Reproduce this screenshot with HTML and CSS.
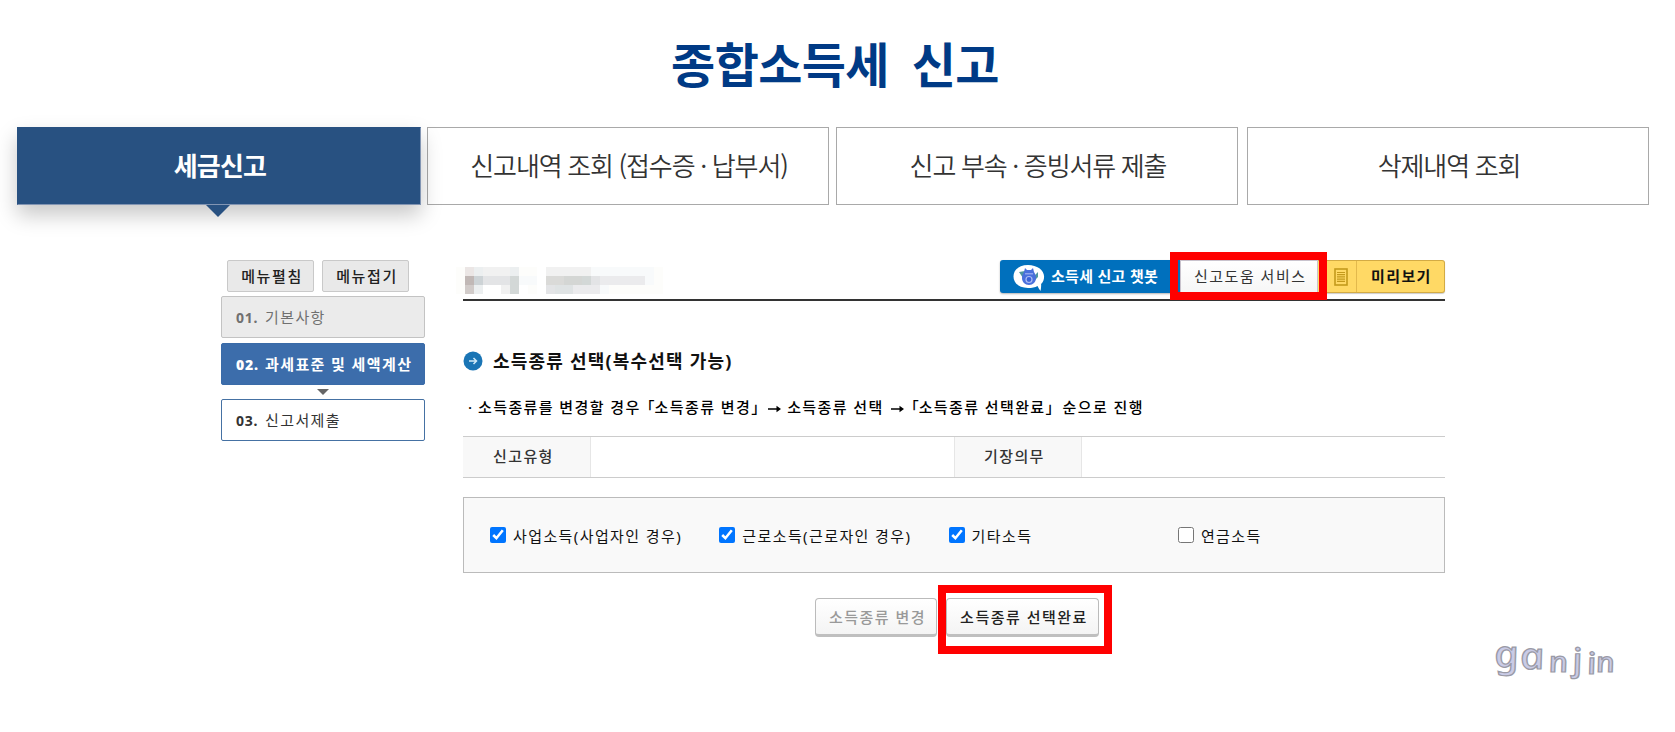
FILE: index.html
```html
<!DOCTYPE html>
<html lang="ko">
<head>
    <meta charset="UTF-8">
    <meta name="viewport" content="width=device-width, initial-scale=1.0">
    <title>종합소득세 신고</title>
    <link rel="stylesheet" href="styles.css">
</head>
<body>
    <h1>종합소득세 신고</h1>

    <div class="tabs">
        <a class="tab active">세금신고</a>
        <a class="tab">신고내역 조회 (접수증 · 납부서)</a>
        <a class="tab">신고 부속 · 증빙서류 제출</a>
        <a class="tab">삭제내역 조회</a>
    </div>

    <div class="content">
        <div class="side">
            <div class="side-buttons">
                <button>메뉴펼침</button>
                <button>메뉴접기</button>
            </div>
            <a class="step done"><b>01.</b>기본사항</a>
            <a class="step current"><b>02.</b>과세표준 및 세액계산</a>
            <a class="step next"><b>03.</b>신고서제출</a>
        </div>

        <div class="main">
            <div class="main-header">
                <!-- 가려진 이름 -->
                <svg class="mosaic" width="207" height="27" viewBox="0 0 23 3" shape-rendering="crispEdges">
                    <path fill="#fdfdfb" d="M0 0h1v3h-1zM7 0h2v1h-2zM8 2h1v1h-1zM22 0h1v3h-1zM17 2h5v1h-5z"/>
                    <path fill="#ebe6e5" d="M1 0h1v1h-1z"/>
                    <path fill="#c1b8b6" d="M1 1h1v1h-1z"/>
                    <path fill="#d1cbc9" d="M1 2h1v1h-1z"/>
                    <path fill="#eceff0" d="M2 0h1v1h-1zM6 0h1v1h-1zM2 2h1v1h-1z"/>
                    <path fill="#cdd3d6" d="M2 1h1v1h-1z"/>
                    <path fill="#f1f1f1" d="M3 0h3v1h-3zM5 2h1v1h-1zM10 0h5v1h-5z"/>
                    <path fill="#e3e4e6" d="M3 1h3v1h-3zM15 1h1v1h-1zM10 2h1v1h-1z"/>
                    <path fill="#d3d8d7" d="M6 1h1v2h-1zM14 1h1v1h-1z"/>
                    <path fill="#f8fafb" d="M7 1h2v1h-2zM15 0h7v1h-7zM21 1h1v1h-1zM16 2h1v1h-1z"/>
                    <path fill="#dadad8" d="M10 1h2v1h-2z"/>
                    <path fill="#d4d6d4" d="M12 1h2v1h-2z"/>
                    <path fill="#ebebed" d="M16 1h5v1h-5zM13 2h3v1h-3z"/>
                    <path fill="#dfe3e4" d="M11 2h2v1h-2z"/>
                </svg>
                <div class="header-buttons">
                    <a class="chatbot">
                        <svg width="32" height="28" viewBox="0 0 32 28">
                            <path fill="#fff" d="M15 1C6 1 .5 6 .5 12.500S6 24 15 24c4 0 7-.6 9.500-2 .8 1.700 1.700 3.500 3 5 .5-2.300.8-4.600.6-7 2-2 3-4.500 3-7.500C31 6 24 1 15 1z"/>
                            <path fill="#4f96a0" d="M6 8l6-1 1 6-3 1zM25 8l-5 5 2 3 3-3z"/>
                            <path fill="#4a70dc" d="M12 4l2 2h4l2-2 1 4c1 2 2 3 2 6 0 4-3 7-7 7s-7-3-7-7c0-3 1-4 2-6z"/>
                            <path fill="#8fa3ee" d="M12 9h8v1.500h-8z"/>
                            <circle cx="16" cy="15.500" r="3" fill="#3a62d8" stroke="#aebcf2" stroke-width="1.200"/>
                        </svg>
                        <span>소득세 신고 챗봇</span>
                    </a>
                    <a class="help">신고도움 서비스<i class="mark"></i></a>
                    <a class="preview">
                        <svg width="14" height="18" viewBox="0 0 14 18" fill="none" stroke="#c49a1c">
                            <rect x="1" y="1" width="12" height="16" stroke-width="1.600"/>
                            <path stroke-width="1.200" d="M3 4.500h8M3 6.700h8M3 8.900h8M3 11.100h8M3 13.300h8"/>
                        </svg>
                        <span>미리보기</span>
                    </a>
                </div>
            </div>

            <h2>
                <svg width="20" height="20" viewBox="0 0 20 20">
                    <circle cx="10" cy="10" r="9.500" fill="#1a75b5"/>
                    <path d="M6 10h7M10.500 7l3 3-3 3" fill="none" stroke="#cfeaf8" stroke-width="1.500"/>
                </svg>
                소득종류 선택(복수선택 가능)
            </h2>
            <p class="guide"><span class="dot">·</span>소득종류를 변경할 경우<span class="quote">「</span>소득종류 변경<span class="quote close">」</span><svg class="arrow" width="13" height="8" viewBox="0 0 13 8"><path d="M0 3.200h8.500V.8L13 4 8.500 7.200V4.800H0z"/></svg>소득종류 선택<svg class="arrow second" width="13" height="8" viewBox="0 0 13 8"><path d="M0 3.200h8.500V.8L13 4 8.500 7.200V4.800H0z"/></svg><span class="quote">「</span>소득종류 선택완료<span class="quote close">」</span>순으로 진행</p>

            <div class="info">
                <div class="label">신고유형</div>
                <div class="value"></div>
                <div class="label second">기장의무</div>
                <div class="value"></div>
            </div>

            <div class="income">
                <label><input type="checkbox" checked>사업소득(사업자인 경우)</label>
                <label><input type="checkbox" checked>근로소득(근로자인 경우)</label>
                <label><input type="checkbox" checked>기타소득</label>
                <label><input type="checkbox">연금소득</label>
            </div>

            <div class="actions">
                <button disabled>소득종류 변경</button>
                <button class="complete">소득종류 선택완료<i class="mark"></i></button>
            </div>
        </div>
    </div>

    <svg class="sign" width="130" height="52" viewBox="0 0 130 52">
        <text transform="translate(2 36) skewX(12) scale(1.15 1)"><tspan x="0" y="-3" font-size="37">g</tspan><tspan x="22" y="-1" font-size="37">a</tspan><tspan x="46" y="2" font-size="29">n</tspan><tspan x="67" y="1" font-size="32">j</tspan><tspan x="79" y="4" font-size="30">i</tspan><tspan x="87" y="2" font-size="28">n</tspan></text>
    </svg>
</body>
</html>
```
FILE: styles.css
```css
* {
    box-sizing: border-box;
}
body {
    margin: 0;
    width: 1675px;
    height: 732px;
    position: relative;
    overflow: hidden;
    background: #fff;
    font-family: "Noto Sans", "Noto Sans CJK KR", sans-serif;
    font-size: 15px;
    letter-spacing: 1.4px;
    color: #333;
}
h1 {
    margin: 0;
    height: 127px;
    padding-right: 5px;
    line-height: 124px;
    text-align: center;
    font-family: "Noto Sans CJK KR", sans-serif;
    font-size: 48px;
    font-weight: 700;
    letter-spacing: -0.6px;
    word-spacing: 10px;
    color: #003a85;
}

/* 상단 탭 */
.tabs {
    display: grid;
    grid-template-columns: 410px 409px 411px 402px;
    padding-left: 17px;
}
.tab {
    width: 402px;
    height: 78px;
    padding-left: 2px;
    border: 1px solid #a9a9a9;
    background: #fff;
    line-height: 74px;
    text-align: center;
    font-family: "Noto Sans CJK KR", sans-serif;
    font-size: 26px;
    font-weight: 350;
    letter-spacing: -1.1px;
    word-spacing: -0.5px;
}
.tab.active {
    position: relative;
    width: 404px;
    background: #285181;
    border-color: #285181 #8295b3 #8295b3 #285181;
    color: #fff;
    font-weight: 700;
    letter-spacing: -0.8px;
    box-shadow: 0 10px 20px rgba(0, 0, 0, 0.22);
}
.tab.active::after {
    content: "";
    position: absolute;
    left: 188px;
    top: 77px;
    border: 12px solid transparent;
    border-top-color: #285181;
    border-bottom: 0;
}

.content {
    display: flex;
    padding: 55px 0 0 221px;
}

/* 왼쪽 메뉴 */
.side {
    width: 204px;
    margin-right: 38px;
}
.side-buttons {
    display: flex;
    gap: 8px;
    padding: 0 6px;
    margin-bottom: 4px;
}
.side-buttons button {
    width: 87px;
    height: 32px;
    padding: 0 0 0 3px;
    border: 1px solid #c9c9c9;
    border-radius: 2px;
    background: #e9e9e9;
    font: inherit;
    font-weight: 500;
    letter-spacing: 1.6px;
    line-height: 29px;
    color: #222;
}
.step {
    display: block;
    position: relative;
    height: 42px;
    padding-left: 14px;
    border: 1px solid #c3c3c3;
    border-radius: 2px;
    line-height: 40px;
    white-space: nowrap;
}
.step b {
    display: inline-block;
    width: 29px;
    font-size: 14px;
    letter-spacing: 0.8px;
}
.step.done {
    background: #ebebeb;
    color: #707070;
}
.step.current {
    margin: 5px 0 14px;
    border-color: #3a6ba8;
    background: #3c6dab;
    color: #fff;
    font-weight: 700;
    letter-spacing: 1.4px;
}
.step.current::after {
    content: "";
    position: absolute;
    left: 95px;
    top: 45px;
    border: 6px solid transparent;
    border-top-color: #666;
    border-bottom: 0;
}
.step.next {
    border-color: #4571a3;
    background: #fff;
}

/* 본문 */
.main {
    width: 982px;
}
.main-header {
    display: flex;
    justify-content: space-between;
    height: 41px;
    border-bottom: 2px solid #333;
}
.mosaic {
    margin: 7px 0 0 -7px;
}
.header-buttons {
    display: flex;
    line-height: 31px;
}
.header-buttons a {
    height: 33px;
}
.chatbot {
    display: flex;
    width: 180px;
    padding: 4px 0 0 13px;
    border-radius: 3px 0 0 3px;
    background: #0070bd;
    box-shadow: 0 1px 2px rgba(0, 0, 0, 0.3);
    color: #fff;
    font-weight: 700;
    letter-spacing: 0.3px;
    line-height: 24px;
}
.chatbot span {
    margin-left: 6px;
}
.help {
    position: relative;
    width: 138px;
    padding-left: 13px;
    border: 1px solid #c9c3cd;
    background: linear-gradient(#fff, #f6f6f6);
    letter-spacing: 1.5px;
    white-space: nowrap;
}
.mark {
    position: absolute;
    border: 8px solid #f00;
}
.help .mark {
    left: -11px;
    top: -9px;
    width: 157px;
    height: 48px;
}
.preview {
    display: flex;
    width: 127px;
    border: 1px solid #d3ab44;
    border-left: 0;
    border-radius: 0 3px 3px 0;
    background: #ffd965;
    box-shadow: 0 1px 1px rgba(0, 0, 0, 0.2);
    color: #111;
    font-weight: 700;
}
.preview svg {
    margin: 7px 8px 0 16px;
}
.preview span {
    padding-left: 14px;
    border-left: 1px solid #e3b94c;
}
h2 {
    display: flex;
    align-items: center;
    margin: 42px 0 0;
    height: 34px;
    font-size: 18px;
    font-weight: 700;
    letter-spacing: 1.2px;
    color: #111;
}
h2 svg {
    margin: 2px 10px 0 0;
}
.guide {
    display: flex;
    align-items: center;
    margin: 14px 0 14px;
    height: 31px;
    padding-left: 5px;
    font-weight: 500;
    white-space: pre;
    color: #000;
}
.guide .dot {
    width: 10px;
}
.guide .quote {
    width: 15px;
    margin-left: -1px;
    letter-spacing: 0;
}
.guide .quote.close {
    width: 17px;
    margin-left: 0;
}
.guide .arrow {
    margin: 4px 6px 0 0;
}
.guide .arrow.second {
    margin: 4px 1px 0 7px;
}
.info {
    display: flex;
    height: 42px;
    border: 1px solid #ccc;
    border-width: 1px 0;
    line-height: 39px;
}
.info .label {
    width: 128px;
    padding-left: 30px;
    border-right: 1px solid #e6e6e6;
    background: #f8f8f8;
    font-weight: 500;
}
.info .label.second {
    padding-left: 29px;
    border-left: 1px solid #e6e6e6;
}
.info .value {
    flex: 1;
}
.income {
    display: flex;
    align-items: center;
    height: 76px;
    margin-top: 19px;
    padding-left: 26px;
    border: 1px solid #bbb;
    background: #f9f9f9;
    color: #111;
}
.income label {
    display: flex;
    align-items: center;
    width: 229.300px;
    white-space: nowrap;
}
.income input {
    width: 16px;
    height: 16px;
    margin: 0 7px 0 0;
}
.actions {
    display: flex;
    gap: 9px;
    padding: 25px 0 0 352px;
}
.actions button {
    position: relative;
    width: 122px;
    height: 39px;
    padding: 0 0 0 3px;
    border: 1px solid #bbb;
    border-bottom: 3px solid #bfbfbf;
    border-radius: 4px;
    background: linear-gradient(#fff, #f4f4f4);
    font: inherit;
    font-weight: 500;
    letter-spacing: 1.5px;
    color: #222;
    white-space: nowrap;
}
.actions button:disabled {
    color: #999;
}
.actions .complete {
    width: 153px;
}
.complete .mark {
    left: -9px;
    top: -14px;
    width: 174px;
    height: 69px;
}

/* 서명 */
.sign {
    position: absolute;
    left: 1495px;
    top: 634px;
    overflow: visible;
}
.sign text {
    font-family: "Noto Sans", sans-serif;
    font-style: italic;
    font-weight: 500;
    letter-spacing: 0;
    fill: #c9cbe6;
    stroke: #9a9aa6;
    stroke-width: 1.200px;
}
```
